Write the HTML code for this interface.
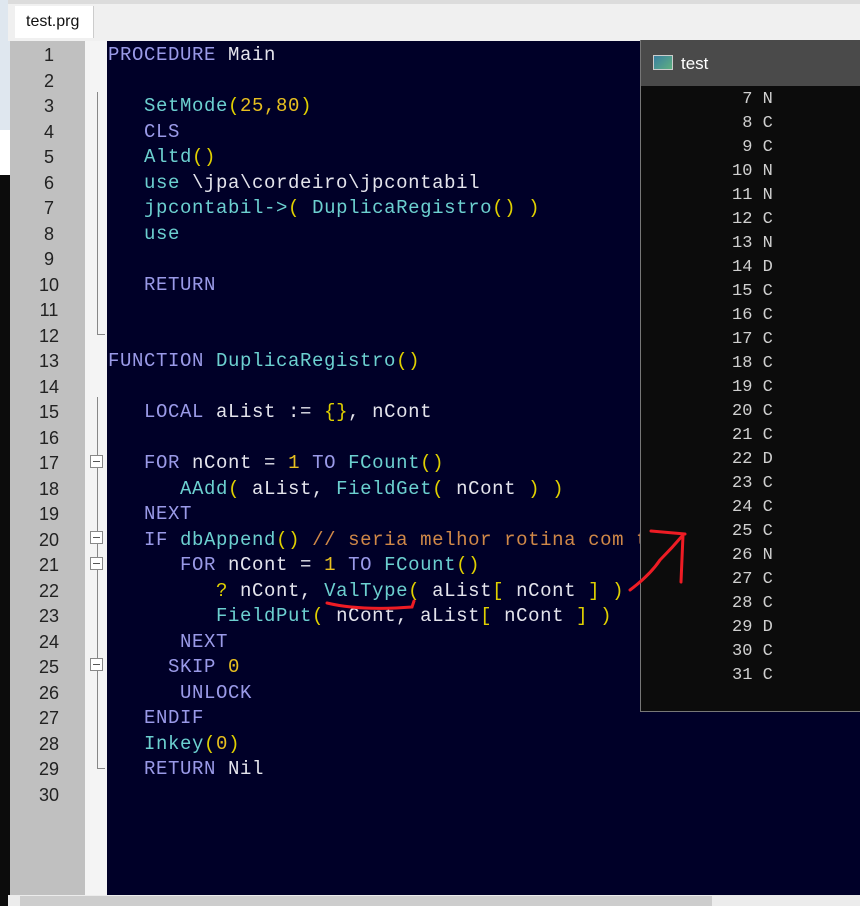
<!DOCTYPE html>
<html><head><meta charset="utf-8"><style>
*{margin:0;padding:0;box-sizing:border-box}
body{width:860px;height:906px;overflow:hidden;background:#fff;position:relative;font-family:"Liberation Sans",sans-serif}
.abs{position:absolute}
#code{position:absolute;left:108px;top:43px;font-family:"Liberation Mono",monospace;font-size:19px;line-height:25.5px;white-space:pre;color:#e4e4ec;letter-spacing:0.6px}
#nums{position:absolute;left:10px;top:43px;width:78px;text-align:center;font-family:"Liberation Sans",sans-serif;font-size:18px;line-height:25.5px;color:#222}
.k{color:#9a9ae8}.f{color:#6cd0d0}.b{color:#e0d000}.n{color:#e8c020}.c{color:#d08848}
#con{position:absolute;left:640px;top:40px;width:220px;height:672px;background:#0c0c0c;border-left:1px solid #777;border-bottom:1px solid #777}
#tb{height:46px;background:#4a4a4a;color:#fff;font-size:17px;padding:14px 0 0 40px}
#cl{position:absolute;left:40px;top:48px;font-family:"Liberation Mono",monospace;font-size:17px;line-height:24px;color:#d0d0d0;white-space:pre}
.box{position:absolute;left:90px;width:13px;height:13px;border:1px solid #888;background:#fff}
.box:after{content:"";position:absolute;left:2px;top:5px;width:7px;height:1px;background:#555}
</style></head><body>
<div class="abs" style="left:0;top:0;width:10px;height:175px;background:#dfe7ef"></div>
<div class="abs" style="left:0;top:130px;width:10px;height:45px;background:#fff"></div>
<div class="abs" style="left:0;top:175px;width:10px;height:731px;background:#0c0c0c"></div>
<div class="abs" style="left:8px;top:0;width:852px;height:41px;background:#f0f0f0;border-top:4px solid #dcdcdc"></div>
<div class="abs" style="left:15px;top:6px;width:79px;height:32px;background:#fff;border-right:1px solid #ccc;font-size:16px;padding:7px 0 0 11px;color:#111">test.prg</div>
<div class="abs" style="left:10px;top:41px;width:75px;height:854px;background:#c0c0c0"></div>
<div class="abs" style="left:85px;top:41px;width:22px;height:854px;background:#f4f4f4"></div>
<div class="abs" style="left:107px;top:41px;width:753px;height:854px;background:#000028"></div>
<div class="abs" style="left:8px;top:895px;width:852px;height:11px;background:#ececec"></div>
<div class="abs" style="left:20px;top:896px;width:692px;height:10px;background:#cdcdcd"></div>
<div class="abs" style="left:97px;top:92px;width:1px;height:243px;background:#888"></div>
<div class="abs" style="left:97px;top:334px;width:8px;height:1px;background:#888"></div>
<div class="abs" style="left:97px;top:397px;width:1px;height:371px;background:#888"></div>
<div class="abs" style="left:97px;top:768px;width:8px;height:1px;background:#888"></div>
<div class="box" style="top:455px"></div><div class="box" style="top:531px"></div><div class="box" style="top:557px"></div><div class="box" style="top:658px"></div>
<div id="nums">1<br>2<br>3<br>4<br>5<br>6<br>7<br>8<br>9<br>10<br>11<br>12<br>13<br>14<br>15<br>16<br>17<br>18<br>19<br>20<br>21<br>22<br>23<br>24<br>25<br>26<br>27<br>28<br>29<br>30</div>
<div id="code"><span class="k">PROCEDURE</span> Main

   <span class="f">SetMode</span><span class="b">(</span><span class="n">25,80</span><span class="b">)</span>
   <span class="k">CLS</span>
   <span class="f">Altd</span><span class="b">()</span>
   <span class="f">use</span> \jpa\cordeiro\jpcontabil
   <span class="f">jpcontabil-&gt;</span><span class="b">(</span> <span class="f">DuplicaRegistro</span><span class="b">()</span> <span class="b">)</span>
   <span class="f">use</span>

   <span class="k">RETURN</span>


<span class="k">FUNCTION</span> <span class="f">DuplicaRegistro</span><span class="b">()</span>

   <span class="k">LOCAL</span> aList := <span class="b">{}</span>, nCont

   <span class="k">FOR</span> nCont = <span class="n">1</span> <span class="k">TO</span> <span class="f">FCount</span><span class="b">()</span>
      <span class="f">AAdd</span><span class="b">(</span> aList, <span class="f">FieldGet</span><span class="b">(</span> nCont <span class="b">)</span> <span class="b">)</span>
   <span class="k">NEXT</span>
   <span class="k">IF</span> <span class="f">dbAppend</span><span class="b">()</span> <span class="c">// seria melhor rotina com t</span>
      <span class="k">FOR</span> nCont = <span class="n">1</span> <span class="k">TO</span> <span class="f">FCount</span><span class="b">()</span>
         <span class="b">?</span> nCont, <span class="f">ValType</span><span class="b">(</span> aList<span class="b">[</span> nCont <span class="b">]</span> <span class="b">)</span>
         <span class="f">FieldPut</span><span class="b">(</span> nCont, aList<span class="b">[</span> nCont <span class="b">]</span> <span class="b">)</span>
      <span class="k">NEXT</span>
     <span class="k">SKIP</span> <span class="n">0</span>
      <span class="k">UNLOCK</span>
   <span class="k">ENDIF</span>
   <span class="f">Inkey</span><span class="b">(</span><span class="n">0</span><span class="b">)</span>
   <span class="k">RETURN</span> Nil</div>
<div id="con"><div id="tb">test</div>
<div class="abs" style="left:12px;top:15px;width:20px;height:15px;background:linear-gradient(135deg,#3a7fa0,#5fb080);border:1px solid #ccc"></div>
<div id="cl">      7 N
      8 C
      9 C
     10 N
     11 N
     12 C
     13 N
     14 D
     15 C
     16 C
     17 C
     18 C
     19 C
     20 C
     21 C
     22 D
     23 C
     24 C
     25 C
     26 N
     27 C
     28 C
     29 D
     30 C
     31 C</div></div>
<svg class="abs" style="left:0;top:0" width="860" height="906"><g fill="none" stroke="#ee1c24" stroke-width="3" stroke-linecap="round">
<path d="M327 603 Q360 611 412 607 L414 601"/>
<path d="M630 590 Q650 575 660 560 Q672 548 683 535"/>
<path d="M651 531 L685 534"/><path d="M683 535 L681 582"/></g></svg>
</body></html>
